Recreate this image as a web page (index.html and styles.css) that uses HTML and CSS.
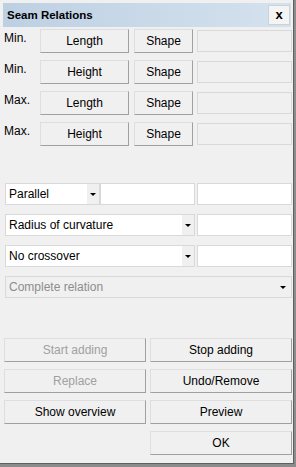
FILE: index.html
```html
<!DOCTYPE html>
<html lang="en">
<head>
    <meta charset="UTF-8">
    <title>Seam Relations</title>
    <link rel="stylesheet" href="styles.css">
</head>
<body>
    <div class="window">
        <div class="titlebar">
            <span class="title">Seam Relations</span>
            <button class="close">x</button>
        </div>

        <div class="limits">
            <div class="limit-row">
                <span class="limit-label">Min.</span>
                <button class="btn btn-measure">Length</button>
                <button class="btn btn-shape">Shape</button>
                <input class="field field-limit" type="text" disabled>
            </div>
            <div class="limit-row">
                <span class="limit-label">Min.</span>
                <button class="btn btn-measure">Height</button>
                <button class="btn btn-shape">Shape</button>
                <input class="field field-limit" type="text" disabled>
            </div>
            <div class="limit-row">
                <span class="limit-label">Max.</span>
                <button class="btn btn-measure">Length</button>
                <button class="btn btn-shape">Shape</button>
                <input class="field field-limit" type="text" disabled>
            </div>
            <div class="limit-row">
                <span class="limit-label">Max.</span>
                <button class="btn btn-measure">Height</button>
                <button class="btn btn-shape">Shape</button>
                <input class="field field-limit" type="text" disabled>
            </div>
        </div>

        <div class="relations">
            <div class="rel-row">
                <div class="combo combo-short">
                    <span class="combo-text">Parallel</span>
                    <span class="combo-arrow"></span>
                </div>
                <input class="field field-mid" type="text">
                <input class="field field-end" type="text">
            </div>
            <div class="rel-row">
                <div class="combo combo-long">
                    <span class="combo-text">Radius of curvature</span>
                    <span class="combo-arrow"></span>
                </div>
                <input class="field field-end" type="text">
            </div>
            <div class="rel-row">
                <div class="combo combo-long">
                    <span class="combo-text">No crossover</span>
                    <span class="combo-arrow"></span>
                </div>
                <input class="field field-end" type="text">
            </div>
            <div class="rel-row">
                <div class="combo combo-full disabled">
                    <span class="combo-text">Complete relation</span>
                    <span class="combo-arrow"></span>
                </div>
            </div>
        </div>

        <div class="actions">
            <button class="btn" disabled>Start adding</button>
            <button class="btn">Stop adding</button>
            <button class="btn" disabled>Replace</button>
            <button class="btn">Undo/Remove</button>
            <button class="btn">Show overview</button>
            <button class="btn">Preview</button>
            <span></span>
            <button class="btn">OK</button>
        </div>
    </div>
</body>
</html>
```

FILE: styles.css
```css
* {
    margin: 0;
    padding: 0;
    box-sizing: border-box;
}

body {
    font-family: "Liberation Sans", Arial, sans-serif;
    font-size: 12px;
    color: #000;
    background: #f0f0f0;
}

.window {
    width: 296px;
    height: 467px;
    padding: 3px 2px 0 4px;
    background: #f0f0f0;
    border-right: 2px solid #8c8c8c;
    border-bottom: 3px solid #8c8c8c;
    box-shadow: inset -1px -1px 0 #5f5f5f;
    display: flex;
    flex-direction: column;
}

.titlebar {
    height: 24px;
    margin: 0 1px 0 -1px;
    padding: 0 1px 0 4px;
    background: linear-gradient(to right, #bdd0e3, #d5e2ee);
    display: flex;
    align-items: center;
    justify-content: space-between;
}

.title {
    font-weight: bold;
    font-size: 11.5px;
    color: #000;
}

.close {
    width: 22px;
    height: 20px;
    background: #f4f4f4;
    border: 1px solid #c9d3dc;
    font-family: "Liberation Sans", Arial, sans-serif;
    font-weight: bold;
    font-size: 13px;
    line-height: 16px;
    color: #000;
}

.limits {
    margin-top: 2px;
    display: flex;
    flex-direction: column;
    gap: 7px;
}

.limit-row {
    display: flex;
    height: 24px;
}

.limit-label {
    width: 36px;
    padding-top: 2px;
    color: #000;
}

.btn {
    height: 24px;
    background: #f0f0f0;
    border: 1px solid #dedede;
    border-right-color: #a0a0a0;
    border-bottom-color: #a0a0a0;
    font-family: "Liberation Sans", Arial, sans-serif;
    font-size: 12px;
    color: #000;
    text-align: center;
}

.btn:disabled {
    color: #a0a0a0;
}

.btn-measure {
    width: 89px;
}

.btn-shape {
    width: 59px;
    margin-left: 5px;
}

.field {
    height: 22px;
    background: #fff;
    border: 1px solid #d9d9d9;
    outline: none;
}

.field:disabled {
    background: #f0f0f0;
}

.field-limit {
    width: 95px;
    margin: 1px 0 0 4px;
}

.relations {
    margin-top: 37px;
    padding-left: 1px;
    display: flex;
    flex-direction: column;
    gap: 9px;
}

.rel-row {
    display: flex;
    height: 22px;
}

.combo {
    height: 22px;
    background: #fff;
    border: 1px solid #d9d9d9;
    display: flex;
    align-items: center;
    justify-content: space-between;
    padding-left: 3px;
}

.combo-short {
    width: 95px;
}

.combo-long {
    width: 190px;
}

.combo-full {
    width: 287px;
}

.combo-arrow {
    width: 12px;
    height: 20px;
    background: #f0f0f0;
    position: relative;
}

.combo-arrow::after {
    content: "";
    position: absolute;
    left: 3px;
    top: 9px;
    border-left: 3px solid transparent;
    border-right: 3px solid transparent;
    border-top: 3px solid #000;
}

.combo.disabled {
    background: #f0f0f0;
}

.combo.disabled .combo-text {
    color: #8d8d8d;
}

.combo.disabled .combo-arrow::after {
    left: 1px;
}

.field-mid {
    width: 95px;
}

.field-end {
    width: 95px;
    margin-left: 2px;
}

.actions {
    margin-top: 40px;
    display: grid;
    grid-template-columns: 142px 142px;
    column-gap: 4px;
    row-gap: 7px;
}
```
